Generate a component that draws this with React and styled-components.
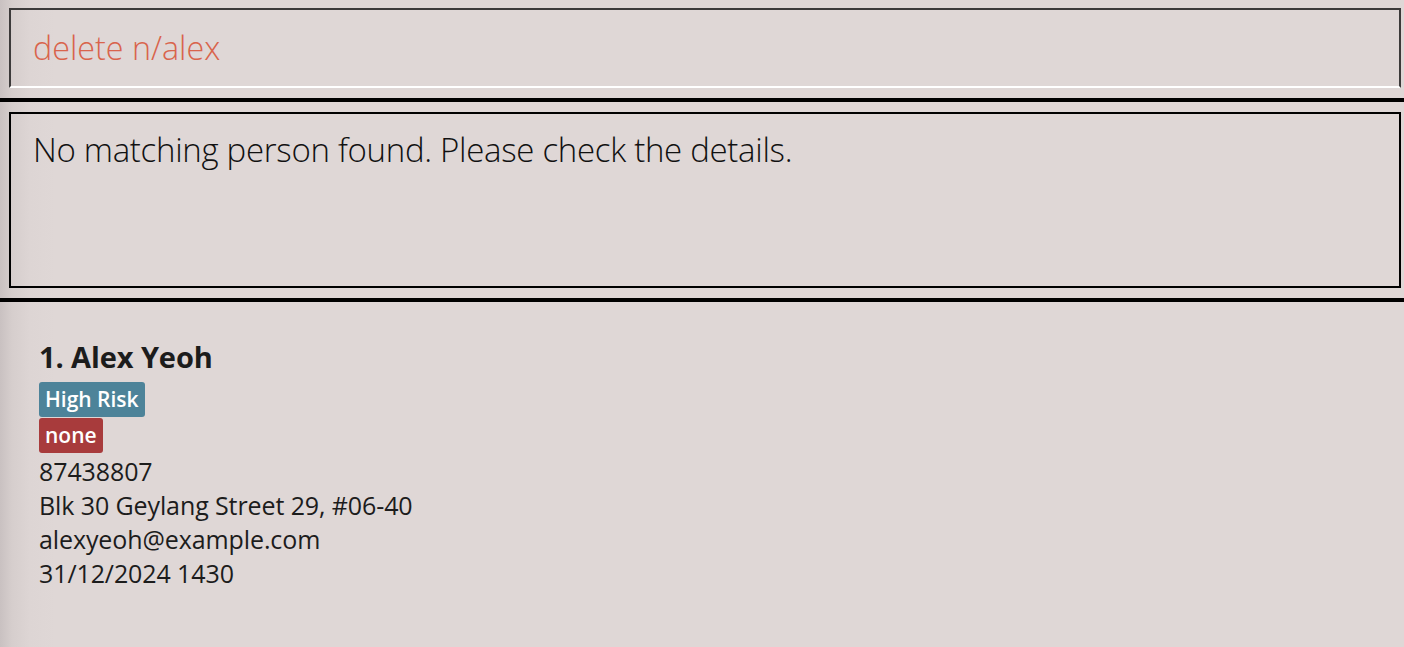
import React from "react";
import styled, { createGlobalStyle } from "styled-components";

const Global = createGlobalStyle`
  html, body { margin: 0; padding: 0; }
  body {
    width: 1404px;
    height: 647px;
    overflow: hidden;
    background: linear-gradient(to right, #c9c1c1 0px, #d6cecd 12px, #ddd5d4 30px, #dfd7d6 55px, #dfd7d6 100%);
    font-family: "Open Sans", "Noto Sans", sans-serif;
  }
`;

const Page = styled.div`
  display: flex;
  flex-direction: column;
  width: 1404px;
  height: 647px;
`;

const Section = styled.div`
  padding: ${(p) => p.$pad};
  display: flex;
`;

const CommandBox = styled.div`
  flex: 1;
  height: 80px;
  border: 2px solid #3c3a3a;
  border-bottom-color: #ffffff;
  display: flex;
  align-items: center;
  padding-left: 22px;
  padding-bottom: 2px;
  box-sizing: border-box;
`;

const CommandText = styled.span`
  font-family: "Open Sans", sans-serif;
  font-weight: 300;
  font-size: 32.3px;
  color: #d9644c;
`;

const Divider = styled.div`
  height: 4px;
  background: #000;
`;

const ResultBox = styled.div`
  flex: 1;
  height: 176px;
  border: 2px solid #000;
  padding: 14px 22px;
  box-sizing: border-box;
`;

const ResultText = styled.div`
  font-family: "Open Sans", sans-serif;
  font-weight: 300;
  font-size: 33px;
  line-height: 44px;
  color: #111;
  letter-spacing: -0.3px;
`;

const Card = styled.div`
  display: flex;
  flex-direction: column;
  align-items: flex-start;
  padding: 36px 0 0 39px;
`;

const Name = styled.div`
  font-family: "Open Sans", sans-serif;
  font-weight: 700;
  font-size: 29px;
  line-height: 38px;
  color: #1c1c1c;
  margin-bottom: 6px;
  letter-spacing: -0.1px;
`;

const Tag = styled.span`
  background: ${(p) => p.$bg};
  color: #fff;
  font-family: "Open Sans", sans-serif;
  font-weight: 600;
  font-size: 21px;
  line-height: 35px;
  height: 35px;
  padding: 0 6px;
  border-radius: 3px;
  margin-bottom: 1px;
`;

const Info = styled.div`
  font-family: "Open Sans", sans-serif;
  font-size: 25px;
  line-height: 34px;
  color: #1c1c1c;
  letter-spacing: -0.1px;
`;

export default function App() {
  return (
    <Page>
      <Global />
      <Section $pad="8px 3px 10px 9px">
        <CommandBox>
          <CommandText>delete n/alex</CommandText>
        </CommandBox>
      </Section>
      <Divider />
      <Section $pad="10px 3px 10px 9px">
        <ResultBox>
          <ResultText>No matching person found. Please check the details.</ResultText>
        </ResultBox>
      </Section>
      <Divider />
      <Card>
        <Name>1. Alex Yeoh</Name>
        <Tag $bg="#4d8399">High Risk</Tag>
        <Tag $bg="#a83b3c">none</Tag>
        <Info>87438807</Info>
        <Info>Blk 30 Geylang Street 29, #06-40</Info>
        <Info>alexyeoh@example.com</Info>
        <Info>31/12/2024 1430</Info>
      </Card>
    </Page>
  );
}
